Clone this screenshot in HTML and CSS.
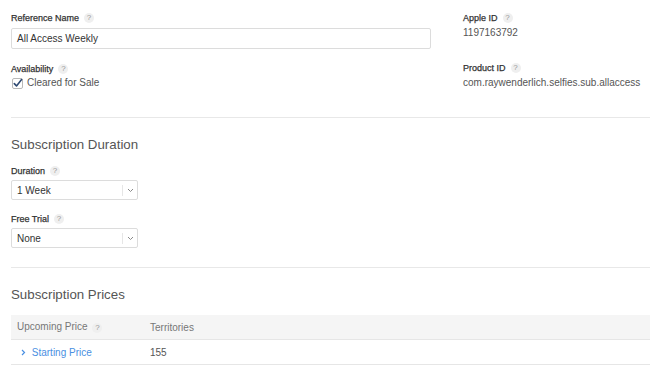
FILE: index.html
```html
<!DOCTYPE html>
<html>
<head>
    <title>Subscription</title>
    <link rel="stylesheet" href="styles.css">
</head>
<body>
    <div class="page">
        <div class="info-row">
            <div class="info-left">
                <div class="field-label">Reference Name <span class="help">?</span></div>
                <div class="text-input">All Access Weekly</div>

                <div class="field-label avail">Availability <span class="help">?</span></div>
                <div class="check-row">
                    <svg class="check" width="11" height="11" viewBox="0 0 11 11">
                        <rect x="0.5" y="0.5" width="10" height="10" rx="1.5" fill="#fff" stroke="#b8b8b8"/>
                        <path d="M2.3 5.6 L4.5 7.9 L9.6 1.6" fill="none" stroke="#2f4a73" stroke-width="1.6" stroke-linecap="round" stroke-linejoin="round"/>
                    </svg>
                    <span>Cleared for Sale</span>
                </div>
            </div>
            <div class="info-right">
                <div class="field-label">Apple ID <span class="help">?</span></div>
                <div class="field-value">1197163792</div>

                <div class="field-label product">Product ID <span class="help">?</span></div>
                <div class="field-value">com.raywenderlich.selfies.sub.allaccess</div>
            </div>
        </div>

        <div class="section">
            <h2>Subscription Duration</h2>
            <div class="field-label">Duration <span class="help">?</span></div>
            <div class="select-box">
                <span class="select-text">1 Week</span>
                <span class="select-arrow">
                    <svg width="7" height="5" viewBox="0 0 7 5"><path d="M1 1 L3.5 3.5 L6 1" fill="none" stroke="#888" stroke-width="1"/></svg>
                </span>
            </div>
            <div class="field-label trial">Free Trial <span class="help">?</span></div>
            <div class="select-box">
                <span class="select-text">None</span>
                <span class="select-arrow">
                    <svg width="7" height="5" viewBox="0 0 7 5"><path d="M1 1 L3.5 3.5 L6 1" fill="none" stroke="#888" stroke-width="1"/></svg>
                </span>
            </div>
        </div>

        <div class="section">
            <h2>Subscription Prices</h2>
            <table class="prices">
                <thead>
                    <tr>
                        <th class="col-price">Upcoming Price <span class="help">?</span></th>
                        <th>Territories</th>
                    </tr>
                </thead>
                <tbody>
                    <tr>
                        <td class="col-price">
                            <svg class="chev" width="5" height="7" viewBox="0 0 5 7"><path d="M1 1 L3.5 3.5 L1 6" fill="none" stroke="#4a90e2" stroke-width="1.2"/></svg>
                            <a class="link">Starting Price</a>
                        </td>
                        <td>155</td>
                    </tr>
                </tbody>
            </table>
        </div>
    </div>
</body>
</html>
```

FILE: styles.css
```css
body {
    margin: 0;
    background-color: #ffffff;
    font-family: "Liberation Sans", Arial, sans-serif;
    color: #333;
}

.page {
    padding: 12px 0 0 11px;
}

.info-row {
    display: flex;
    gap: 32px;
}

.info-left {
    width: 420px;
}

.info-right {
    flex: 1;
}

.field-label {
    font-size: 9px;
    color: #333;
    -webkit-text-stroke: 0.25px #333;
    line-height: 12px;
    display: flex;
    align-items: center;
    gap: 5px;
}

.help {
    display: inline-flex;
    align-items: center;
    justify-content: center;
    width: 10px;
    height: 10px;
    border-radius: 50%;
    background-color: #efefef;
    color: #999;
    font-size: 8px;
    font-weight: normal;
    -webkit-text-stroke: 0;
}

.text-input {
    margin-top: 4px;
    height: 19px;
    line-height: 19px;
    border: 1px solid #dcdcdc;
    border-radius: 2px;
    padding-left: 5px;
    font-size: 10px;
    color: #333;
}

.avail {
    margin-top: 14px;
}

.check-row {
    margin-top: 1px;
    display: flex;
    align-items: center;
    gap: 4px;
    font-size: 10px;
    line-height: 14px;
    color: #555;
    padding-left: 1px;
}

.field-value {
    margin-top: 2px;
    font-size: 10px;
    line-height: 14px;
    color: #555;
}

.product {
    margin-top: 22px;
}

.section {
    margin-top: 27px;
    border-top: 1px solid #e8e8e8;
}

.section + .section {
    margin-top: 19px;
}

h2 {
    margin: 18px 0 0 0;
    font-size: 13.3px;
    font-weight: normal;
    line-height: 18px;
    color: #555;
}

.section .field-label:first-of-type {
    margin-top: 11px;
}

.trial {
    margin-top: 13px;
}

.select-box {
    margin-top: 3px;
    width: 125px;
    height: 18px;
    border: 1px solid #dcdcdc;
    border-radius: 2px;
    display: flex;
    align-items: center;
    font-size: 10px;
    color: #333;
}

.select-text {
    flex: 1;
    padding-left: 5px;
}

.select-arrow {
    width: 14px;
    height: 11px;
    border-left: 1px solid #e6e6e6;
    display: flex;
    align-items: center;
    justify-content: center;
}

.prices {
    margin-top: 11px;
    width: 100%;
    border-collapse: collapse;
    font-size: 10px;
}

.prices th {
    background-color: #f5f5f5;
    font-weight: normal;
    color: #777;
    text-align: left;
    height: 24px;
    padding: 0;
    border-bottom: 1px solid #e6e6e6;
}

.prices td {
    height: 24px;
    padding: 0;
    color: #555;
    border-bottom: 1px solid #e6e6e6;
}

.prices .col-price {
    width: 133px;
    padding-left: 6px;
}

.prices th .help {
    margin-left: 2px;
    vertical-align: middle;
}

.chev {
    margin-left: 4px;
    margin-right: 3px;
}

.link {
    color: #4a90e2;
}
```
